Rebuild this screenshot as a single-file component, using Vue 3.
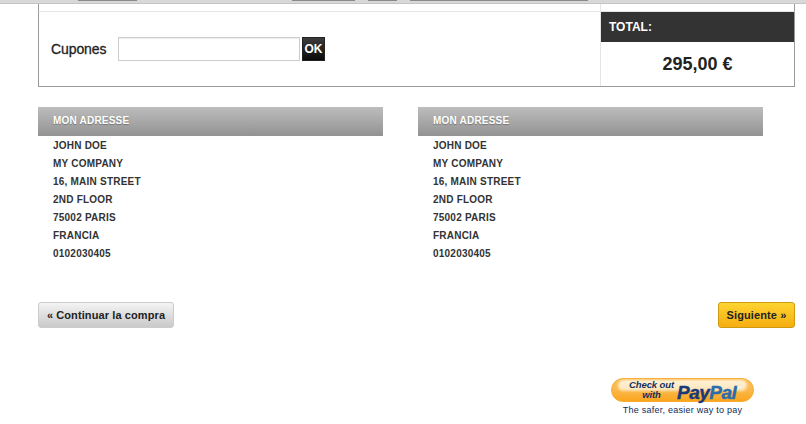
<script setup>
const lines = ['JOHN DOE', 'MY COMPANY', '16, MAIN STREET', '2ND FLOOR', '75002 PARIS', 'FRANCIA', '0102030405']
const boxes = [0, 1]
</script>

<template>
  <div class="page">
    <div class="topbar">
      <span class="tab t1"></span>
      <span class="tab t2"></span>
      <span class="tab t3"></span>
      <span class="tab t4"></span>
    </div>
    <div class="wrap">
      <div class="stub">
        <div class="stub-cell"></div>
      </div>
      <div class="summary">
        <div class="coupon">
          <label class="coupon-label">Cupones</label>
          <input class="coupon-input" type="text" />
          <button class="ok">OK</button>
        </div>
        <div class="total">
          <div class="total-head">TOTAL:</div>
          <div class="total-value">295,00 €</div>
        </div>
      </div>
      <div class="addresses">
        <div v-for="b in boxes" :key="b" class="address">
          <div class="address-head">MON ADRESSE</div>
          <div v-for="l in lines" :key="l" class="address-line">{{ l }}</div>
        </div>
      </div>
      <div class="nav">
        <a class="btn back">« Continuar la compra</a>
        <a class="btn next">Siguiente »</a>
      </div>
      <div class="paypal-row">
        <div class="paypal">
          <div class="pill">
            <span class="checkout">Check out<br />with</span>
            <span class="pp"><span class="pay">Pay</span><span class="pal">Pal</span><span class="tm">™</span></span>
          </div>
          <div class="tagline">The safer, easier way to pay</div>
        </div>
      </div>
    </div>
  </div>
</template>

<style>
body { margin: 0; background: #fff; }
</style>

<style scoped>
.page {
  width: 806px;
  height: 424px;
  overflow: hidden;
  position: relative;
  font-family: "Liberation Sans", Arial, sans-serif;
  color: #222;
}
.topbar {
  height: 3px;
  background: #d8d8d8;
  border-bottom: 1px solid #c4c4c4;
  position: relative;
}
.tab {
  position: absolute;
  top: 0;
  height: 1px;
  background: #8a8a8a;
}
.t1 { left: 78px; width: 59px; }
.t2 { left: 292px; width: 63px; }
.t3 { left: 368px; width: 29px; }
.t4 { left: 410px; width: 178px; }
.wrap {
  width: 757px;
  margin-left: 38px;
}
.stub {
  height: 7px;
  border-left: 1px solid #999;
  border-right: 1px solid #999;
  display: flex;
  justify-content: flex-end;
}
.stub-cell {
  width: 193px;
  border-left: 1px solid #e5e5e5;
}
.summary {
  display: flex;
  height: 74px;
  border: 1px solid #999;
  border-top: 1px solid #e5e5e5;
}
.coupon {
  flex: 1;
  display: flex;
  align-items: center;
  padding-left: 12px;
}
.coupon-label {
  font-size: 14px;
  font-weight: 400;
  letter-spacing: -0.1px;
  color: #222;
  width: 67px;
  -webkit-text-stroke: 0.3px #222;
}
.coupon-input {
  box-sizing: border-box;
  width: 182px;
  height: 24px;
  border: 1px solid #ccc;
  box-shadow: inset 0 1px 1px #eee;
  margin: 0;
  padding: 0;
  background: #fff;
}
.ok {
  box-sizing: border-box;
  width: 23px;
  height: 24px;
  margin-left: 2px;
  padding: 0;
  border: 1px solid #222;
  background: linear-gradient(#3c3c3c, #0a0a0a);
  color: #fff;
  font: bold 12px "Liberation Sans", Arial, sans-serif;
}
.total {
  width: 193px;
  border-left: 1px solid #e5e5e5;
}
.total-head {
  height: 30px;
  line-height: 30px;
  background: #333;
  color: #fff;
  font-size: 12px;
  font-weight: 700;
  padding-left: 8px;
}
.total-value {
  text-align: center;
  font-size: 18px;
  font-weight: 700;
  line-height: 44px;
  color: #222;
}
.addresses {
  display: flex;
  gap: 35px;
  margin-top: 20px;
}
.address {
  width: 345px;
}
.address-head {
  height: 29px;
  line-height: 28px;
  padding-left: 15px;
  margin-bottom: 1px;
  background: linear-gradient(#bdbdbd, #929292);
  color: #fff;
  font-size: 10px;
  font-weight: 700;
  letter-spacing: 0.2px;
  text-shadow: 0 1px 1px #777;
}
.address-line {
  height: 18px;
  line-height: 18px;
  padding-left: 15px;
  font-size: 10px;
  font-weight: 700;
  letter-spacing: 0.22px;
  color: #333;
}
.nav {
  display: flex;
  justify-content: space-between;
  margin-top: 39px;
}
.btn {
  box-sizing: border-box;
  height: 26px;
  line-height: 24px;
  border-radius: 3px;
  font-size: 11px;
  font-weight: 700;
  text-align: center;
}
.back {
  width: 136px;
  border: 1px solid #ccc;
  background: linear-gradient(#f4f4f4, #c9c9c9);
  color: #222;
  letter-spacing: 0.1px;
}
.next {
  width: 77px;
  border: 1px solid #d09a10;
  background: linear-gradient(#fdd430, #f6ad12);
  color: #222;
  letter-spacing: 0.1px;
}
.paypal-row {
  display: flex;
  justify-content: flex-end;
  margin-top: 50px;
  padding-right: 41px;
}
.paypal {
  width: 143px;
  text-align: center;
}
.pill {
  position: relative;
  height: 24px;
  border-radius: 12px;
  background: linear-gradient(#fbc060 0, #fbb84a 50%, #fba51f 100%);
  border: 1px solid #f8ab2c;
  box-sizing: border-box;
  display: flex;
  align-items: center;
  padding-left: 17px;
  gap: 3px;
}
.pill::before {
  content: "";
  position: absolute;
  top: 1px;
  left: 6px;
  right: 6px;
  height: 11px;
  border-radius: 8px;
  background: linear-gradient(#fff4dc, #fde3b4);
  filter: blur(1px);
}
.checkout {
  position: relative;
  font: italic 700 9.5px/10px "Liberation Sans", Arial, sans-serif;
  color: #14305f;
  text-align: center;
  letter-spacing: -0.1px;
}
.pp {
  position: relative;
  font: italic 700 19px/20px "Liberation Sans", Arial, sans-serif;
  letter-spacing: -0.5px;
  -webkit-text-stroke: 0.4px currentColor;
}
.pay { color: #173a7a; }
.pal { color: #2a6cb0; }
.tm {
  font-size: 5px;
  vertical-align: 9px;
  color: #fff;
  -webkit-text-stroke: 0;
}
.tagline {
  font-size: 9px;
  letter-spacing: 0.25px;
  color: #0f2a55;
  line-height: 14px;
  margin-top: 1px;
  white-space: nowrap;
}
</style>
